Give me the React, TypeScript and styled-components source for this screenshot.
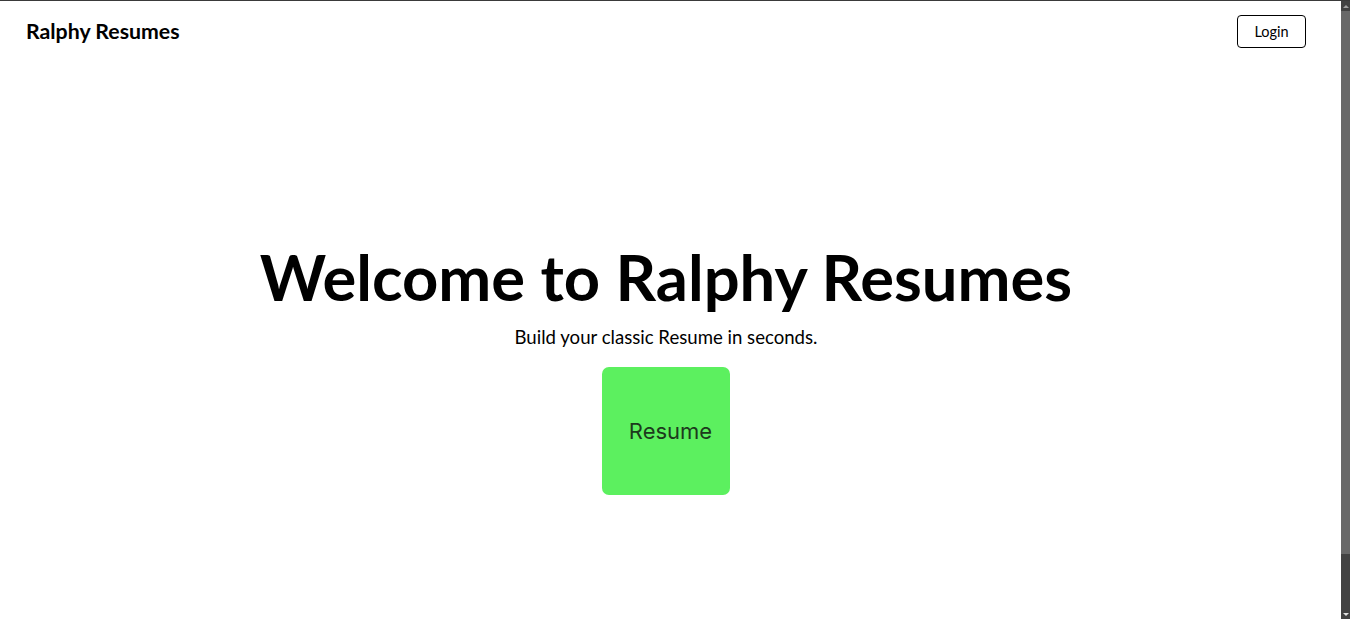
import styled, { createGlobalStyle } from "styled-components";

const GlobalStyle = createGlobalStyle`
  html, body {
    margin: 0;
    padding: 0;
    height: 100%;
    overflow: hidden;
    background: #ffffff;
  }
  body {
    font-family: "Lato", "Open Sans", sans-serif;
    color: #000;
  }
`;

const App = () => {
  return (
    <>
      <GlobalStyle />
      <Frame>
        <Page>
          <NavBar>
            <Brand>Ralphy Resumes</Brand>
            <LoginButton>Login</LoginButton>
          </NavBar>
          <Hero>
            <Title>Welcome to Ralphy Resumes</Title>
            <Subtitle>Build your classic Resume in seconds.</Subtitle>
            <ResumeCard>Resume</ResumeCard>
          </Hero>
        </Page>
        <ScrollTrack>
          <Arrow $up />
          <Thumb />
          <TrackRest />
          <Arrow />
        </ScrollTrack>
      </Frame>
    </>
  );
};

export default App;

const Frame = styled.div`
  display: flex;
  height: 619px;
  border-top: 1px solid #3a3a3a;
  box-sizing: border-box;
`;
const Page = styled.div`
  flex: 1;
  display: flex;
  flex-direction: column;
`;
const NavBar = styled.div`
  display: flex;
  justify-content: space-between;
  align-items: center;
  height: 62px;
  padding: 0 35px 0 26px;
`;
const Brand = styled.div`
  font-size: 21.3px;
  font-weight: 700;
  margin-top: -3px;
`;
const LoginButton = styled.button`
  width: 69px;
  height: 33px;
  margin-top: -1px;
  background: #fff;
  border: 1px solid #000;
  border-radius: 4px;
  font-family: "Lato", sans-serif;
  font-size: 14.5px;
  color: #000;
  padding: 0;
`;
const Hero = styled.div`
  display: flex;
  flex-direction: column;
  align-items: center;
  padding-top: 176px;
  padding-right: 9px;
`;
const Title = styled.h1`
  margin: 0;
  font-size: 63.3px;
  line-height: 76px;
  font-weight: 700;
`;
const Subtitle = styled.p`
  margin: 10px 0 0;
  font-size: 18.6px;
  line-height: 24px;
`;
const ResumeCard = styled.div`
  margin-top: 18px;
  width: 128px;
  height: 128px;
  box-sizing: border-box;
  padding-left: 9px;
  border-radius: 7px;
  background: #5cf05f;
  display: flex;
  align-items: center;
  justify-content: center;
  font-family: "Inter", sans-serif;
  font-size: 22px;
  color: #1c3a1c;
`;
const ScrollTrack = styled.div`
  width: 9px;
  background: #424242;
  display: flex;
  flex-direction: column;
`;
const Thumb = styled.div`
  height: 543px;
  background: #686868;
`;
const TrackRest = styled.div`
  flex: 1;
`;
const Arrow = styled.div<{ $up?: boolean }>`
  height: 10px;
  display: flex;
  align-items: center;
  justify-content: center;
  &::before {
    content: "";
    border-left: 3px solid transparent;
    border-right: 3px solid transparent;
    ${(p) =>
      p.$up
        ? "border-bottom: 3px solid #a0a0a0;"
        : "border-top: 3px solid #e0e0e0;"}
  }
`;
